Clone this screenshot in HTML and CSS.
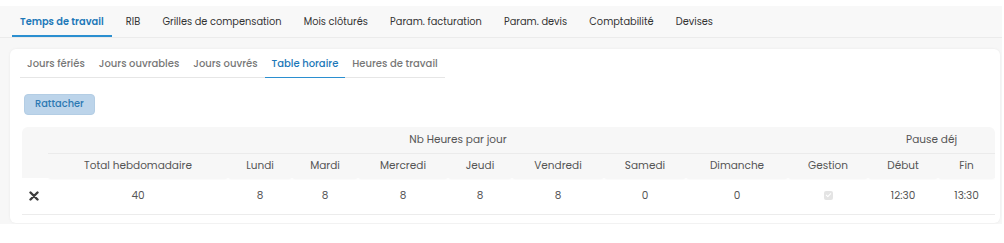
FILE: index.html
```html
<!DOCTYPE html>
<html>
<head>
    <title>Paramètres - Temps de travail</title>
    <link rel="stylesheet" href="styles.css">
</head>
<body>
    <div class="settings">
        <ul class="main-tabs">
            <li class="active">Temps de travail</li>
            <li>RIB</li>
            <li>Grilles de compensation</li>
            <li>Mois clôturés</li>
            <li>Param. facturation</li>
            <li>Param. devis</li>
            <li>Comptabilité</li>
            <li>Devises</li>
        </ul>

        <div class="panel">
            <div class="card">
                <ul class="sub-tabs">
                    <li>Jours fériés</li>
                    <li>Jours ouvrables</li>
                    <li>Jours ouvrés</li>
                    <li class="active">Table horaire</li>
                    <li>Heures de travail</li>
                </ul>

                <div class="toolbar">
                    <button type="button" class="btn-attach">Rattacher</button>
                </div>

                <table class="schedule">
                    <colgroup>
                        <col class="c-del">
                        <col class="c-total">
                        <col class="c-lun">
                        <col class="c-mar">
                        <col class="c-mer">
                        <col class="c-jeu">
                        <col class="c-ven">
                        <col class="c-sam">
                        <col class="c-dim">
                        <col class="c-gest">
                        <col class="c-deb">
                        <col class="c-fin">
                    </colgroup>
                    <thead>
                        <tr class="group-row">
                            <th rowspan="2" class="first"></th>
                            <th colspan="9">Nb Heures par jour</th>
                            <th colspan="2" class="last">Pause déj</th>
                        </tr>
                        <tr class="label-row">
                            <th>Total hebdomadaire</th>
                            <th>Lundi</th>
                            <th>Mardi</th>
                            <th>Mercredi</th>
                            <th>Jeudi</th>
                            <th>Vendredi</th>
                            <th>Samedi</th>
                            <th>Dimanche</th>
                            <th>Gestion</th>
                            <th>Début</th>
                            <th>Fin</th>
                        </tr>
                    </thead>
                    <tbody>
                        <tr>
                            <td class="del">
                                <svg width="10" height="10" viewBox="0 0 10 10"><path d="M1.5 1.5 L8.5 8.5 M8.5 1.5 L1.5 8.5" stroke="#3d3d3d" stroke-width="2.4" stroke-linecap="round"/></svg>
                            </td>
                            <td>40</td>
                            <td>8</td>
                            <td>8</td>
                            <td>8</td>
                            <td>8</td>
                            <td>8</td>
                            <td>0</td>
                            <td>0</td>
                            <td><span class="check"></span></td>
                            <td>12:30</td>
                            <td>13:30</td>
                        </tr>
                    </tbody>
                </table>
            </div>
        </div>
    </div>
</body>
</html>
```

FILE: styles.css
```css
body { margin: 0; background: #fff; font-family: Poppins, "Open Sans", sans-serif; color: #444; }
.settings { width: 1002px; margin-top: 6px; background: #f7f7f7; }

.main-tabs { list-style: none; margin: 0; padding: 0 0 0 9px; height: 31px; display: flex; border-bottom: 1px solid #ebebeb; background: #f8f8f8; }
.main-tabs li { margin: 0 3.1px; padding: 3px 8px 0; line-height: 25px; font-size: 9.8px; color: #333; border-bottom: 2px solid transparent; }
.main-tabs li.active { margin-left: 3px; color: #1d78b8; font-weight: 600; border-bottom-color: #2b8fd0; }

.panel { padding: 11px 2px 1px 10px; }
.card { background: #fff; border-radius: 6px; box-shadow: 0 0 3px rgba(0, 0, 0, 0.06); padding: 0 5px 8px 12px; }

.sub-tabs { list-style: none; margin: 0 0 0 -2px; padding: 0; display: inline-flex; border-bottom: 1px solid #e6e6e6; height: 28px; }
.sub-tabs li { padding: 1px 7px 0; line-height: 27px; font-size: 10px; font-weight: 500; color: #777; border-bottom: 1px solid transparent; margin-bottom: -1px; }
.sub-tabs li.active { color: #1d78b8; border-bottom-color: #2b8fd0; }

.toolbar { padding: 11px 0 12px 2px; }
.btn-attach { font-family: inherit; font-size: 9.8px; font-weight: 500; color: #2c79b3; background: #bcd4ea; border: 1px solid #b3cde4; border-radius: 4px; padding: 0 10px; height: 21px; cursor: pointer; }

.schedule { table-layout: fixed; width: 973px; border-collapse: separate; border-spacing: 0; font-size: 10.5px; color: #555; }
.schedule th { font-weight: 400; background: #f7f7f7; text-align: center; padding: 0; }
.schedule .group-row th { height: 26px; border-bottom: 1px solid #ebebeb; }
.schedule .group-row th.first { border-bottom: none; border-top-left-radius: 6px; }
.schedule .group-row th.last { border-top-right-radius: 6px; }
.schedule .label-row th { height: 24px; box-shadow: 0 2px 2px -1px rgba(0, 0, 0, 0.05); }
.schedule td { text-align: center; height: 36px; border-bottom: 1px solid #ececec; padding: 0; }
.schedule td.del { text-align: left; padding-left: 7px; }
.schedule td.del svg { display: block; }

.check { display: inline-block; width: 9px; height: 9px; background: #e4e4e4; border-radius: 2px; vertical-align: middle; position: relative; }
.check::after { content: ""; position: absolute; left: 3px; top: 1px; width: 2px; height: 4px; border: solid #fff; border-width: 0 1px 1px 0; transform: rotate(45deg); }

.c-del { width: 26px; }
.c-total { width: 180px; }
.c-lun { width: 64px; }
.c-mar { width: 66px; }
.c-mer { width: 90px; }
.c-jeu { width: 64px; }
.c-ven { width: 92px; }
.c-sam { width: 82px; }
.c-dim { width: 102px; }
.c-gest { width: 80px; }
.c-deb { width: 70px; }
.c-fin { width: 57px; }
```
